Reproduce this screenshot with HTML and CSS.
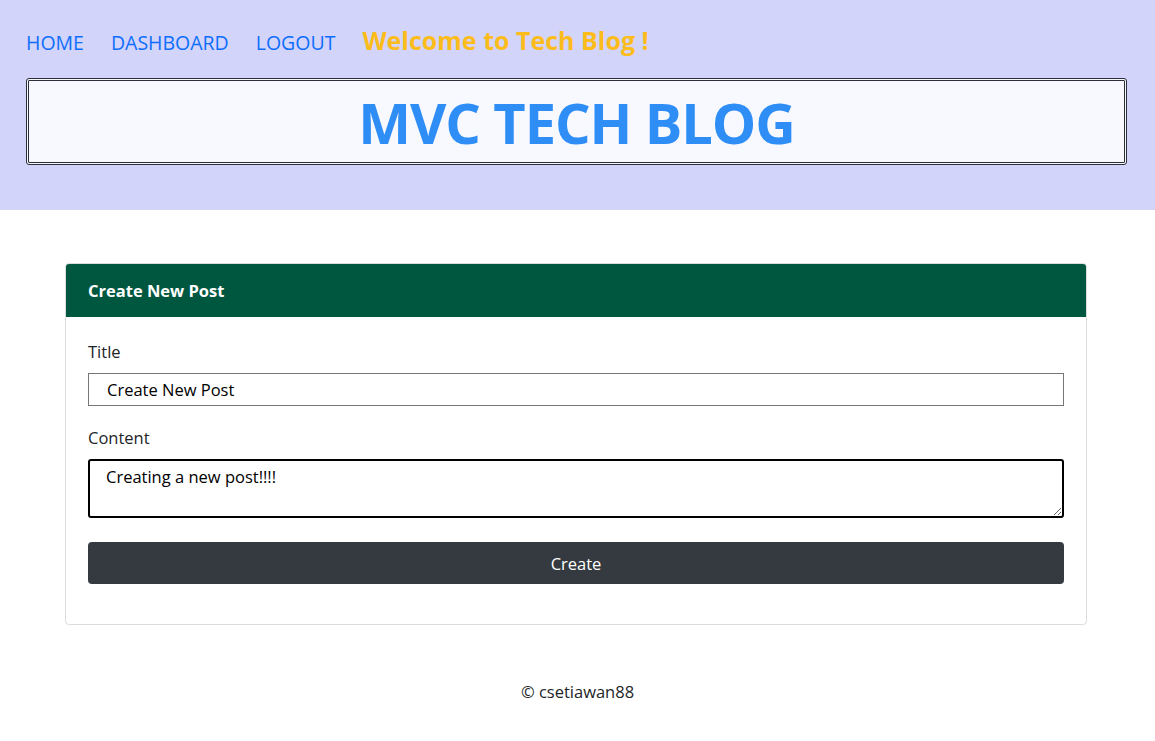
FILE: index.html
```html
<!DOCTYPE html>
<html lang="en">
<head>
<meta charset="utf-8">
<title>MVC Tech Blog</title>
<link rel="stylesheet" href="styles.css">
</head>
<body>
<header class="site-header">
  <nav class="nav">
    <a class="nav-link" href="#">HOME</a>
    <a class="nav-link" href="#">DASHBOARD</a>
    <a class="nav-link" href="#">LOGOUT</a>
    <span class="welcome">Welcome to Tech Blog !</span>
  </nav>
  <div class="brand-box">
    <h1 class="brand">MVC TECH BLOG</h1>
  </div>
</header>
<main class="main">
  <section class="card">
    <div class="card-header">Create New Post</div>
    <form class="card-body">
      <label class="label" for="title">Title</label>
      <input class="input" id="title" type="text" value="Create New Post">
      <label class="label" for="content">Content</label>
      <textarea class="textarea" id="content">Creating a new post!!!!</textarea>
      <button class="btn" type="button">Create</button>
    </form>
  </section>
</main>
<footer class="footer">© csetiawan88</footer>
</body>
</html>
```
FILE: styles.css
```css
* { box-sizing: border-box; }
body {
  margin: 0;
  font-family: "Open Sans", "Noto Sans", sans-serif;
  color: #212529;
  background: #fff;
}
.site-header {
  background: #d2d4fa;
  height: 210px;
  padding: 23px 28px 0 26px;
}
.nav {
  display: flex;
  align-items: baseline;
  gap: 27px;
  height: 34px;
}
.nav-link {
  color: #0d6efd;
  text-decoration: none;
  font-size: 19.5px;
}
.welcome {
  color: #fbbc1c;
  font-weight: 700;
  font-size: 25px;
}
.brand-box {
  margin-top: 21px;
  height: 87px;
  border: 3px double #2b2f3a;
  border-radius: 3px;
  background: #f8f8ff;
  display: flex;
  align-items: center;
  justify-content: center;
}
.brand {
  margin: 0;
  color: #2e8ef5;
  font-size: 56px;
  font-weight: 700;
  letter-spacing: -1.1px;
}
.main {
  padding: 53px 68px 0 65px;
}
.card {
  border: 1px solid #dcdcdc;
  border-radius: 4px;
  overflow: hidden;
}
.card-header {
  background: #005740;
  color: #fff;
  font-weight: 700;
  font-size: 16.5px;
  height: 53px;
  display: flex;
  align-items: center;
  padding: 0 22px;
}
.card-body {
  padding: 23px 22px 40px;
  display: flex;
  flex-direction: column;
}
.label {
  font-size: 16.5px;
  margin-bottom: 10px;
}
.input {
  height: 33px;
  flex: none;
  border: 1px solid #767676;
  border-radius: 0;
  padding: 0 18px;
  font: inherit;
  font-size: 16.5px;
  color: #000;
  margin-bottom: 20px;
}
.textarea {
  height: 59px;
  flex: none;
  border: 2px solid #000;
  border-radius: 3px;
  padding: 4px 16px;
  font: inherit;
  font-size: 16.5px;
  color: #000;
  margin-bottom: 24px;
  resize: vertical;
}
.btn {
  height: 42px;
  flex: none;
  border: none;
  border-radius: 4px;
  background: #343a40;
  color: #fff;
  font: inherit;
  font-size: 16.5px;
}
.footer {
  text-align: center;
  font-size: 16.5px;
  padding-top: 55px;
}
```
